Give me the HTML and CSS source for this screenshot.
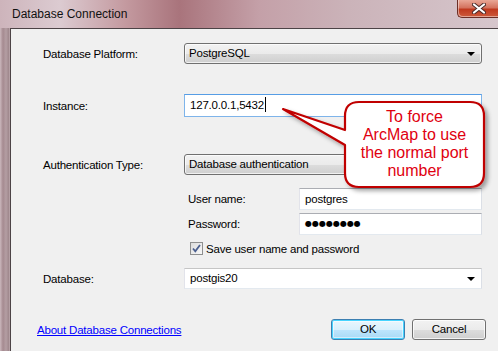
FILE: index.html
```html
<!DOCTYPE html>
<html lang="en">
<head>
    <meta charset="UTF-8">
    <title>Database Connection</title>
    <link rel="stylesheet" href="styles.css">
</head>
<body>
<div id="window">
    <div id="titlebar">
        <span id="title">Database Connection</span>
        <span id="close_btn">
            <svg width="14" height="11" viewBox="0 0 14 11"><path d="M2 1.5 L12 9.5 M12 1.5 L2 9.5" stroke="#4a2a28" stroke-width="4" stroke-linecap="round"/><path d="M2 1.5 L12 9.5 M12 1.5 L2 9.5" stroke="#ffffff" stroke-width="2.2" stroke-linecap="round"/></svg>
        </span>
    </div>
    <div id="frame">
        <div id="client">
            <div class="row row_platform">
                <label class="label">Database Platform:</label>
                <div class="combo">PostgreSQL<span class="arrow"></span></div>
            </div>
            <div class="row row_instance">
                <label class="label">Instance:</label>
                <div class="textbox focused">127.0.0.1,5432<span class="caret"></span></div>
            </div>
            <div class="row row_auth">
                <label class="label">Authentication Type:</label>
                <div class="combo">Database authentication<span class="arrow"></span></div>
            </div>
            <div class="auth_block">
                <div class="subrow">
                    <label class="sublabel">User name:</label>
                    <div class="textbox">postgres</div>
                </div>
                <div class="subrow subrow_pass">
                    <label class="sublabel">Password:</label>
                    <div class="textbox dots">&#9679;&#9679;&#9679;&#9679;&#9679;&#9679;&#9679;&#9679;</div>
                </div>
                <div class="checkrow">
                    <span class="checkbox">
                        <svg width="11" height="11" viewBox="0 0 11 11"><path d="M2 5.5 L4.3 8.3 L9 2" fill="none" stroke="#4b5f8f" stroke-width="1.8"/></svg>
                    </span>
                    <span>Save user name and password</span>
                </div>
            </div>
            <div class="row row_database">
                <label class="label">Database:</label>
                <div class="textbox editcombo">postgis20<span class="arrow"></span></div>
            </div>
            <div class="bottom">
                <a class="help_link">About Database Connections</a>
                <span class="btn btn_default">OK</span>
                <span class="btn">Cancel</span>
            </div>

            <div id="callout">
                <svg width="220" height="100" viewBox="0 0 220 100">
                    <defs>
                        <filter id="shadow" x="-10%" y="-10%" width="130%" height="140%">
                            <feDropShadow dx="3" dy="3" stdDeviation="2" flood-color="#000" flood-opacity="0.35"/>
                        </filter>
                    </defs>
                    <path d="M80 5 H191 Q205 5 205 19 V76 Q205 90 191 90 H80 Q66 90 66 76 V48 L4 12 L66 33 V19 Q66 5 80 5 Z"
                          fill="#ffffff" stroke="#c00000" stroke-width="2.2" stroke-linejoin="round" filter="url(#shadow)"/>
                </svg>
                <div class="callout_text">To force<br>ArcMap to use<br>the normal port<br>number</div>
            </div>
        </div>
    </div>
</div>
</body>
</html>
```

FILE: styles.css
```css
body {
    margin: 0;
    width: 498px;
    height: 351px;
    overflow: hidden;
    font-family: "Liberation Sans", Arial, sans-serif;
    font-size: 11.5px;
    letter-spacing: -0.2px;
    color: #000;
    background: linear-gradient(90deg, #cdb4bb 0%, #dccbd1 12%, #c49aa0 25%, #a9747c 36%, #c4a0a8 52%, #cbb3b9 70%, #d6c6cc 100%);
}

#window {
    display: flex;
    flex-direction: column;
    height: 100%;
}

#titlebar {
    height: 28px;
    display: flex;
    align-items: flex-start;
    position: relative;
}

#title {
    margin-left: 12px;
    margin-top: 7px;
    font-size: 12px;
    letter-spacing: 0;
    color: #111;
    white-space: nowrap;
}

#close_btn {
    margin-left: auto;
    width: 41px;
    height: 18px;
    box-sizing: border-box;
    border: 1px solid #6c2e26;
    border-top: none;
    border-right: none;
    border-bottom-left-radius: 5px;
    background: linear-gradient(#e9a796 0%, #d4735e 45%, #c0391e 55%, #cc5a3c 100%);
    box-shadow: inset 1px -1px 0 rgba(255, 255, 255, 0.45);
    display: flex;
    align-items: center;
    justify-content: center;
    padding-left: 2px;
}

#frame {
    flex: 1;
    display: flex;
    padding-left: 10px;
    background: linear-gradient(90deg, #cbb8bd 0px, #a58a90 3px, #b49ea3 6px, #9e868b 9px, #cbb8bd 10px);
    background-size: 10px 100%;
    background-repeat: no-repeat;
}

#client {
    flex: 1;
    position: relative;
    background-color: #f0f0f0;
    border-left: 1px solid #4c4346;
    border-top: 1px solid #4c4346;
    padding: 14px 16px 0 32px;
}

.row {
    display: grid;
    grid-template-columns: 141px 1fr;
    align-items: center;
}

.row_instance { margin-top: 30px; }
.row_auth { margin-top: 37px; }
.row_database { margin-top: 13px; }

.combo {
    position: relative;
    height: 21px;
    box-sizing: border-box;
    border: 1px solid #707070;
    border-radius: 3px;
    background: linear-gradient(#f2f2f2 0%, #ebebeb 50%, #dddddd 51%, #cfcfcf 100%);
    box-shadow: inset 0 0 0 1px rgba(255, 255, 255, 0.7);
    padding-left: 4px;
    line-height: 19px;
}

.arrow {
    position: absolute;
    right: 6px;
    top: 8px;
    border-left: 4px solid transparent;
    border-right: 4px solid transparent;
    border-top: 4px solid #000;
}

.textbox {
    position: relative;
    height: 22px;
    box-sizing: border-box;
    background-color: #fff;
    border: 1px solid #e3e9ef;
    border-top-color: #abadb3;
    border-left-color: #e2e3ea;
    border-right-color: #dbdfe6;
    padding-left: 5px;
    line-height: 20px;
}

.textbox.focused {
    height: 23px;
    border-color: #7eb4ea;
    border-top-color: #569de5;
    line-height: 21px;
}

.caret {
    display: inline-block;
    width: 1px;
    height: 15px;
    margin-left: 1px;
    background-color: #000;
    vertical-align: -3px;
}

.textbox.editcombo {
    height: 21px;
    line-height: 19px;
    border-top-color: #c5c5c5;
}

.textbox.dots {
    font-size: 8px;
    letter-spacing: 0;
    font-family: "DejaVu Sans", sans-serif;
}

.auth_block {
    margin-top: 13px;
    padding-left: 143px;
}

.subrow {
    display: grid;
    grid-template-columns: 113px 1fr;
    align-items: center;
}

.sublabel { padding-left: 2px; }

.subrow_pass { margin-top: 3px; }

.checkrow {
    margin-top: 7px;
    padding-left: 4px;
    display: flex;
    align-items: center;
    gap: 3px;
    height: 13px;
}

.checkbox {
    width: 13px;
    height: 13px;
    box-sizing: border-box;
    border: 1px solid #8e8f8f;
    background: linear-gradient(135deg, #dcdcdc, #f8f8f8);
    display: flex;
    align-items: center;
    justify-content: center;
}

.bottom {
    margin-top: 30px;
    margin-right: -4px;
    display: flex;
    align-items: center;
    gap: 7px;
}

.help_link {
    margin-left: -6px;
    margin-right: auto;
    color: #0000ff;
    text-decoration: underline;
    cursor: pointer;
}

.btn {
    width: 74px;
    height: 21px;
    box-sizing: border-box;
    border: 1px solid #707070;
    border-radius: 3px;
    background: linear-gradient(#f2f2f2 0%, #ebebeb 50%, #dddddd 51%, #cfcfcf 100%);
    box-shadow: inset 0 0 0 1px rgba(255, 255, 255, 0.75);
    text-align: center;
    line-height: 19px;
}

.btn_default {
    border-color: #3c7fb1;
    background: linear-gradient(#eaf6fd 0%, #d9f0fc 50%, #bee6fd 51%, #a7d9f5 100%);
    box-shadow: inset 0 0 0 1px #48d4ff, inset 0 0 0 2px rgba(255, 255, 255, 0.5);
}

#callout {
    position: absolute;
    left: 268px;
    top: 68px;
    width: 220px;
    height: 100px;
}

#callout svg {
    display: block;
}

.callout_text {
    position: absolute;
    left: 66px;
    width: 139px;
    top: 11px;
    text-align: center;
    color: #e00010;
    font-size: 16px;
    letter-spacing: 0;
    line-height: 18px;
}
```
